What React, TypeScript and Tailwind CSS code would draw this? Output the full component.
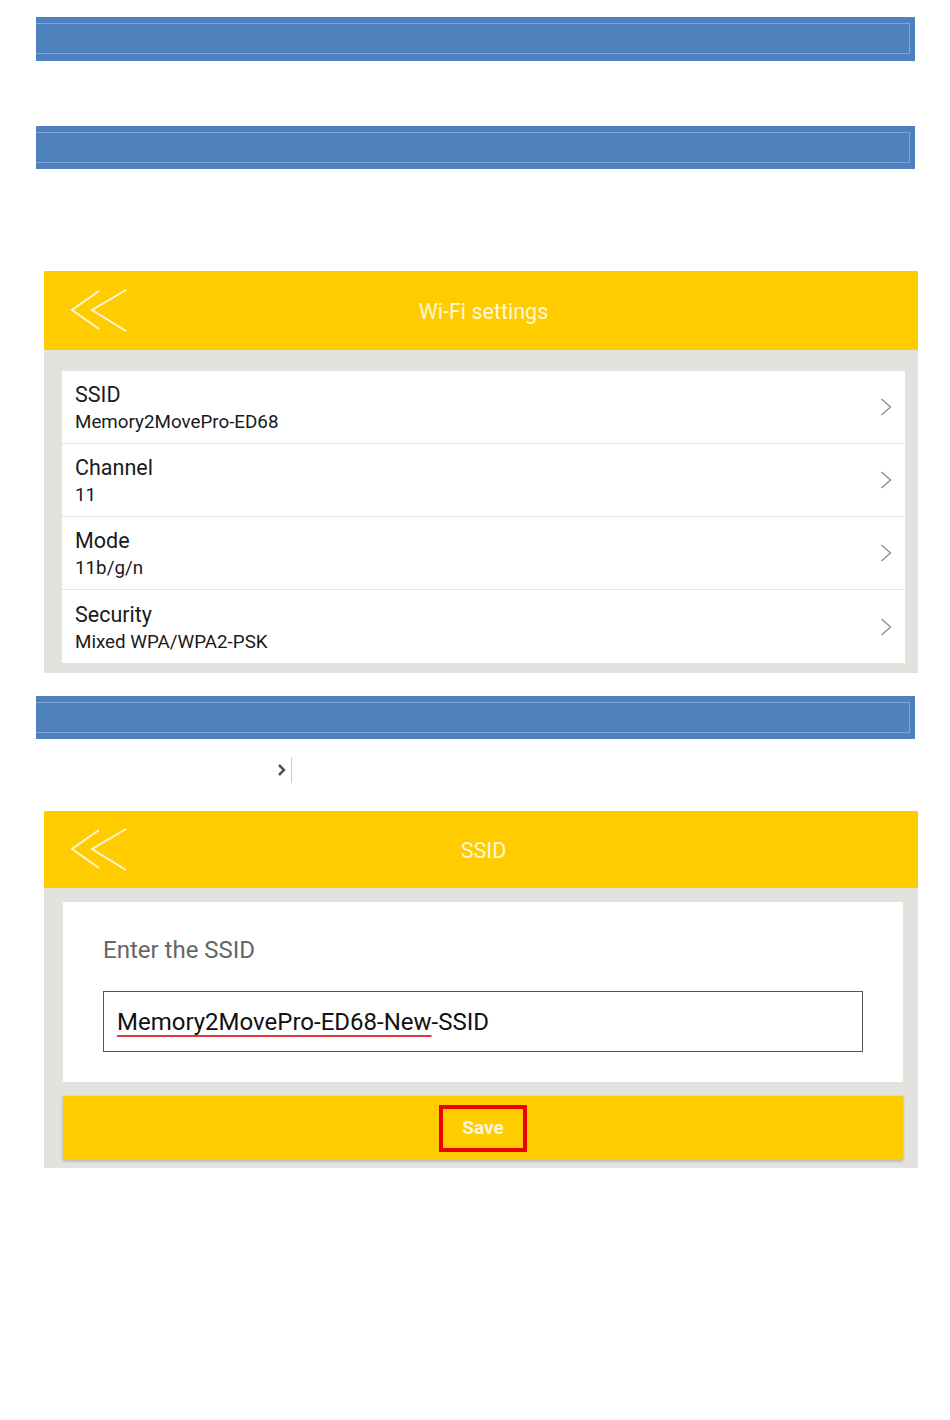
import React from 'react';

const font = { fontFamily: 'Roboto, "Noto Sans", sans-serif' };

const BlueBar = ({ tall = true }: { tall?: boolean }) => (
  <div className={`ml-[36px] w-[879px] ${tall ? 'h-[44px]' : 'h-[43px]'} bg-[#4f81bd] pt-[6px] pr-[5px]`}>
    <div className="h-[31px] border-y border-r border-[#7ea6d9]" />
  </div>
);

const BackIcon = () => (
  <svg width="60" height="44" viewBox="0 0 60 44" fill="none" stroke="#fff6d6" strokeWidth="2">
    <path d="M30 2 L3 21 L30 40" />
    <path d="M57 1 L23 21 L57 42" />
  </svg>
);

const Header = ({ title }: { title: string }) => (
  <div className="relative flex items-center justify-center h-full bg-[#ffcc00] pl-[5px]">
    <div className="absolute left-[25px] top-1/2 -translate-y-1/2">
      <BackIcon />
    </div>
    <span className="text-[21.5px] text-[#fff7dc] mt-[3px]">{title}</span>
  </div>
);

const rows = [
  { label: 'SSID', value: 'Memory2MovePro-ED68' },
  { label: 'Channel', value: '11' },
  { label: 'Mode', value: '11b/g/n' },
  { label: 'Security', value: 'Mixed WPA/WPA2-PSK' },
];

const RowArrow = () => (
  <svg width="12" height="18" viewBox="0 0 12 18" fill="none" stroke="#8a8a8a" strokeWidth="1.3">
    <path d="M1.5 1 L10.5 9 L1.5 17" />
  </svg>
);

export default function App() {
  return (
    <div className="w-[950px] h-[1420px] bg-white pt-[17px]" style={font}>
      <BlueBar />
      <div className="h-[65px]" />
      <BlueBar tall={false} />

      {/* Wi-Fi settings screen */}
      <div className="ml-[44px] mt-[102px] w-[874px]">
        <div className="h-[79px]">
          <Header title="Wi-Fi settings" />
        </div>
        <div className="bg-[#e4e2df] pt-[21px] pb-[10px] pl-[18px] pr-[13px]">
          <div className="bg-white">
            {rows.map((r, i) => (
              <div
                key={r.label}
                className={`flex items-center h-[73px] pl-[13px] pr-[13px] ${i < rows.length - 1 ? 'border-b border-[#e3e3e3]' : ''}`}
              >
                <div className="flex-1 flex flex-col text-[#1a1a1a] pt-[2px]">
                  <span className="text-[21.5px] leading-[27px]">{r.label}</span>
                  <span className="text-[18.8px] leading-[25px] mt-[2px]">{r.value}</span>
                </div>
                <RowArrow />
              </div>
            ))}
          </div>
        </div>
      </div>

      <div className="mt-[23px]">
        <BlueBar tall={false} />
      </div>

      <div className="ml-[272px] mt-[18px] flex items-center h-[26px]">
        <div className="w-[19px] h-full flex items-center justify-center">
          <svg width="10" height="14" viewBox="0 0 10 14" fill="none" stroke="#555" strokeWidth="2.5">
            <path d="M2 2 L7 7 L2 12" />
          </svg>
        </div>
        <div className="w-px h-full bg-[#ccc]" />
      </div>

      {/* SSID screen */}
      <div className="ml-[44px] mt-[28px] w-[874px]">
        <div className="h-[77px]">
          <Header title="SSID" />
        </div>
        <div className="bg-[#e4e2df] pt-[14px] pb-[8px] pl-[19px] pr-[15px]">
          <div className="bg-white h-[180px] pl-[40px] pr-[40px] pt-[34px]">
            <div className="text-[24px] leading-[28px] text-[#666]">Enter the SSID</div>
            <div className="mt-[27px] h-[61px] border border-[#555] flex items-center pl-[13px]">
              <span className="text-[24px] text-[#111]">
                <span className="underline decoration-[#e0393e] decoration-2 underline-offset-[5px] [text-decoration-skip-ink:none]">
                  Memory2MovePro-ED68-New
                </span>
                -SSID
              </span>
            </div>
          </div>
          <div className="mt-[14px] h-[64px] bg-[#ffcc00] shadow-[0_1px_3px_rgba(0,0,0,0.25)] flex items-center justify-center">
            <div className="w-[88px] h-[47px] border-[4px] border-[#ee0000] flex items-center justify-center">
              <span className="text-[19px] font-bold text-[#fff6d6]">Save</span>
            </div>
          </div>
        </div>
      </div>
    </div>
  );
}
